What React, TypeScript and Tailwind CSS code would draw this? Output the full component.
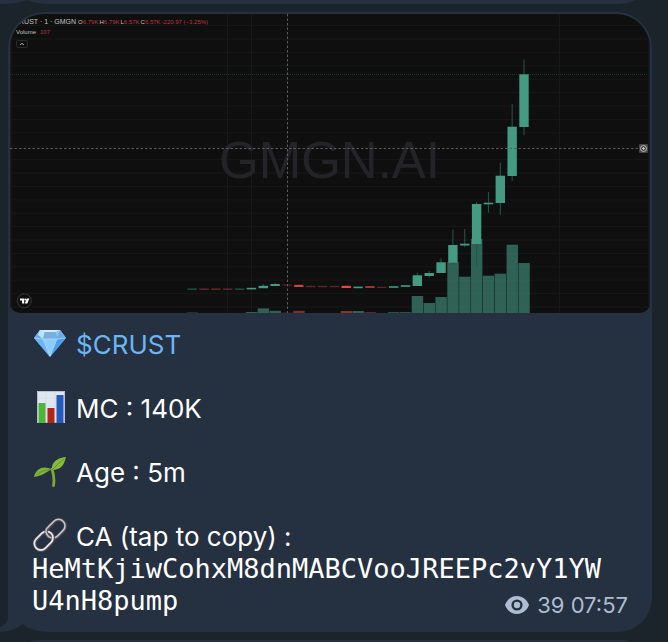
import type { ReactNode } from "react";

const SLOT = 11.85;
const FIRST_X = 182.2;
const BASE = 299;

const UP = "#459a82";
const DOWN = "#c5443f";
const FAINT_UP = "#1f4a3e";
const FAINT_DOWN = "#5c2426";

type Candle = {
  open: number;
  close: number;
  high?: number;
  low?: number;
  fill: string;
  volume?: number;
};

const candles: Candle[] = [
  { open: 274.4, close: 276, fill: FAINT_UP, volume: 1 },
  { open: 274.4, close: 276, fill: FAINT_DOWN },
  { open: 274.4, close: 276, fill: FAINT_DOWN },
  { open: 274.4, close: 276, fill: FAINT_DOWN },
  { open: 274.4, close: 276, fill: FAINT_UP },
  { open: 273.8, close: 275.4, fill: UP, volume: 1 },
  { open: 271.8, close: 274.2, high: 270, fill: UP, volume: 4.6 },
  { open: 270, close: 272, high: 269, fill: UP, volume: 2.2 },
  { open: 270, close: 272, fill: "#40191d", volume: 1 },
  { open: 270.8, close: 273, fill: DOWN, volume: 2.2 },
  { open: 271.8, close: 273.2, fill: FAINT_DOWN },
  { open: 271.8, close: 273.2, fill: FAINT_DOWN },
  { open: 271.8, close: 273.2, fill: FAINT_DOWN },
  { open: 271.8, close: 274, fill: "#dc4a46", volume: 2 },
  { open: 272.6, close: 274.2, fill: UP, volume: 2 },
  { open: 272, close: 274, fill: "#9c3634", volume: 1 },
  { open: 272.8, close: 274, fill: FAINT_DOWN },
  { open: 272, close: 274, fill: "#35806a", volume: 1 },
  { open: 271, close: 273, fill: "#35806a", volume: 1 },
  { open: 261.3, close: 272, high: 258.7, fill: UP, volume: 17 },
  { open: 259, close: 262, high: 257, low: 263.3, fill: UP, volume: 10 },
  { open: 248.3, close: 259, high: 244.3, fill: UP, volume: 16 },
  { open: 231, close: 248.7, high: 215.7, low: 251, fill: UP, volume: 51 },
  { open: 229.7, close: 231.5, high: 215, low: 233, fill: UP, volume: 36.3 },
  { open: 190, close: 230, high: 188, low: 252.7, fill: UP, volume: 74 },
  { open: 188.7, close: 190.3, high: 178, low: 198.7, fill: UP, volume: 37.3 },
  { open: 161.7, close: 189, high: 148.7, low: 201, fill: UP, volume: 39.3 },
  { open: 112.7, close: 162, high: 90, low: 167, fill: UP, volume: 68.3 },
  { open: 60.3, close: 113, high: 45.7, low: 121.3, fill: UP, volume: 50 },
];

const gridRows = Array.from({ length: 22 }, (_, i) => 11.6 + i * 13.4);

const quotes = [
  { label: "O", value: "6.79K" },
  { label: "H", value: "6.79K" },
  { label: "L", value: "6.57K" },
  { label: "C", value: "6.57K" },
];

// the address wraps after 35 characters
const addressLines = ["HeMtKjiwCohxM8dnMABCVooJREEPc2vY1YW", "U4nH8pump"];

function PriceChart() {
  return (
    <svg viewBox="0 0 640 299" className="block w-full" role="img" aria-label="CRUST price chart">
      <rect width="640" height="299" fill="#0f0f0f" />
      <g stroke="#181818">
        {gridRows.map((y) => (
          <line key={y} x1="0" x2="638" y1={y} y2={y} />
        ))}
        <line x1="217.5" x2="217.5" y1="0" y2="299" />
        <line x1="241.5" x2="241.5" y1="0" y2="299" />
        <line x1="549.5" x2="549.5" y1="0" y2="299" />
      </g>
      <path d="M0 0h1.5v299H0zM638.500 0h1.500v299h-1.500z" fill="#191d22" />
      <text
        x="209"
        y="164"
        fontSize="51"
        fill="#242428"
        className="font-['Liberation_Sans',sans-serif]"
      >
        GMGN.AI
      </text>
      <line x1="0" x2="638" y1="60.5" y2="60.5" stroke="#19382f" strokeDasharray="1 1" />

      {candles.map((c, i) => {
        const x = FIRST_X + i * SLOT;
        return (
          <g key={i}>
            {c.volume && (
              <rect
                x={x - 5.6}
                y={BASE - c.volume}
                width="11.4"
                height={c.volume}
                fill={c.fill}
                opacity="0.6"
              />
            )}
            <line x1={x} x2={x} y1={c.high ?? c.open} y2={c.low ?? c.close} stroke="#23594a" />
            <rect x={x - 4.7} y={c.open} width="9.4" height={c.close - c.open} fill={c.fill} />
          </g>
        );
      })}

      {/* crosshair */}
      <g stroke="#5c5c5c" strokeDasharray="2.5 2">
        <line x1="277.5" x2="277.5" y1="0" y2="299" />
        <line x1="0" x2="628" y1="134.5" y2="134.5" />
      </g>
      <rect x="629" y="130" width="9" height="9" rx="1" fill="#464646" />
      <circle cx="633.5" cy="134.5" r="3" fill="none" stroke="#d0d0d0" strokeWidth="0.8" />
      <path d="M632 134.5h3M633.5 133v3" stroke="#d0d0d0" strokeWidth="0.8" />

      {/* TradingView mark */}
      <circle cx="14.3" cy="286.8" r="7" fill="#0f0f0f" stroke="#38383a" />
      <path d="M10 284.5h4.2v5h-2.1v-3H10zM16.8 284.5h2.6l-2.1 5h-2.5z" fill="#fff" />
      <circle cx="15.4" cy="285.6" r="1" fill="#fff" />
    </svg>
  );
}

function ChartLegend() {
  return (
    <div className="absolute left-1 top-1 font-['Liberation_Sans',sans-serif] text-[6px] leading-2 text-[#c4c4c4]">
      <div className="flex items-center gap-px">
        <span className="pr-px text-[7px]">CRUST · 1 · GMGN</span>
        {quotes.map(({ label, value }) => (
          <span key={label}>
            {label}
            <span className="text-[#b83545]">{value}</span>
          </span>
        ))}
        <span className="text-[#b83545]">-220.97 (−3.25%)</span>
      </div>
      <div className="mt-0.5 flex gap-1 pl-0.5">
        <span>Volume</span>
        <span className="text-[#b83545]">107</span>
      </div>
      <button
        type="button"
        aria-label="Collapse legend"
        className="ml-0.5 mt-1 flex h-2 w-3 items-center justify-center rounded-xs border border-[#2c2c2c]"
      >
        <svg viewBox="0 0 6 4" className="h-1 w-1.5" fill="none" stroke="#aaa">
          <path d="M1 3l2-1.6L5 3" />
        </svg>
      </button>
    </div>
  );
}

function GemIcon() {
  return (
    <svg viewBox="0 0 32 32" className="size-8 shrink-0" aria-hidden="true">
      <path d="M6 3h20l6 8-16 19L0 11z" fill="#5aa9f0" />
      <path d="M6 3h20l6 8H0z" fill="#8fcaf6" />
      <path d="M6 3L0 11h9zM26 3l6 8h-9z" fill="#6aabea" />
      <path d="M6 3l5 2-2 7-5-4z" fill="#b9e2fb" />
      <path d="M11 4h10l3 8H9z" fill="#79aedd" />
      <path d="M6 3h20l-5 2H11z" fill="#d4eefd" />
      <path d="M0 11l9 1 7 18z" fill="#6db5f4" />
      <path d="M9 12h14l-7 18z" fill="#8bccfa" />
      <path d="M23 12l9-1-16 19z" fill="#4f9eee" />
      <path d="M1 11l8 1h14l8-1M9 12l7 17 7-17" stroke="#b4dffb" strokeWidth="0.7" fill="none" />
    </svg>
  );
}

function BarsIcon() {
  return (
    <svg viewBox="0 0 32 32" className="size-8 shrink-0" aria-hidden="true">
      <path d="M3 0h28v32H3z" fill="#dfe6f0" />
      <path d="M3 7h28M3 15h28M3 23h28M12 0v32M21 0v32" stroke="#d2dae6" strokeWidth="0.8" />
      <path d="M3.500 0.500h27v31h-27z" fill="none" stroke="#b7c0cf" />
      <path d="M4.500 12h7v20h-7z" fill="#4db53c" />
      <path d="M13.500 17h7v15h-7z" fill="#b3241b" />
      <path d="M22.500 4h7v28h-7z" fill="#2459bd" />
    </svg>
  );
}

function SeedlingIcon() {
  return (
    <svg viewBox="0 -2 32 32" className="size-8 shrink-0" aria-hidden="true">
      <path d="M18 12c2 6 2.500 11 1.500 16.500" fill="none" stroke="#7aac35" strokeWidth="2.800" strokeLinecap="round" />
      <path d="M0 20C2 11 10 8 18 12.500c-5 1-7 6-18 7.500z" fill="#7fb23a" />
      <path d="M18 13C17 5 23 1 32 0c-2 8-5 13-14 13z" fill="#86bb3d" />
      <path d="M3 18C8 13.500 12 12.500 18 13c4-4 7-7 12-11" fill="none" stroke="#5f8f28" strokeWidth="0.9" />
    </svg>
  );
}

function LinkIcon() {
  return (
    <svg viewBox="0 0 32 32" className="size-8 shrink-0 overflow-visible" fill="none" aria-hidden="true">
      <g transform="rotate(-45 16 16)">
        <rect x="14" y="9.500" width="21" height="13" rx="6.500" stroke="#5a4b4c" strokeWidth="3.400" />
        <rect x="14" y="9" width="21" height="13" rx="6.500" stroke="#bcc5d0" strokeWidth="1.600" />
        <rect x="-3" y="9.500" width="21" height="13" rx="6.500" stroke="#5a4b4c" strokeWidth="3.400" />
        <rect x="-3" y="9" width="21" height="13" rx="6.500" stroke="#e2e9f1" strokeWidth="1.800" />
        <path d="M14 17v-2c0-3 2-5.500 5-5.500" stroke="#5a4b4c" strokeWidth="3.400" />
        <path d="M14 17v-2c0-3 2-6 5-6" stroke="#bcc5d0" strokeWidth="1.600" />
      </g>
    </svg>
  );
}

function EyeIcon() {
  return (
    <svg viewBox="0 0 24 18" className="h-[18px] w-6" aria-hidden="true">
      <path
        fill="#aebdd2"
        fillRule="evenodd"
        d="M12 0C6.500 0 2 3.600 0 9c2 5.400 6.500 9 12 9s10-3.600 12-9c-2-5.400-6.500-9-12-9zm0 3.400a5.600 5.600 0 110 11.200 5.600 5.600 0 010-11.200z"
      />
      <circle cx="12" cy="9" r="3.200" fill="#aebdd2" />
    </svg>
  );
}

// little hook under the bottom left corner of an incoming bubble
function BubbleTail() {
  return (
    <svg viewBox="0 0 50 30" className="absolute -left-2 bottom-0 h-[30px] w-[50px]" aria-hidden="true">
      <path d="M9 0v30H0v-5q8-3 8-11V0z" fill="#253040" />
      <path d="M0 30q15-1 22.500-8Q31 30 50 30z" fill="#1b232b" />
    </svg>
  );
}

function Line({ icon, children }: { icon: ReactNode; children: ReactNode }) {
  return (
    <div className="flex h-8 items-center gap-2.5 pl-0.5">
      <span className="-mt-1">{icon}</span>
      <span>{children}</span>
    </div>
  );
}

export default function App() {
  return (
    <main className="min-h-screen overflow-hidden bg-[#1b232b] font-['Inter',sans-serif]">
      <div className="relative ml-2 mr-4 h-1 bg-[#253040]">
        <svg viewBox="0 0 50 4" className="absolute -left-2 top-0 h-1 w-[50px]" aria-hidden="true">
          <path d="M0 0h50v4H0z" fill="#253040" />
          <path d="M0 4q18 0 27-4 9 4 23 4z" fill="#1b232b" />
        </svg>
        <svg viewBox="0 0 36 4" className="absolute right-0 top-0 h-1 w-9" aria-hidden="true">
          <path d="M36 0H20Q12 4 0 4h36z" fill="#1b232b" />
        </svg>
      </div>

      <article className="relative ml-2 mr-4 mt-2 rounded-[36px] rounded-bl-none rounded-br-[34px] bg-[#253040]">
        <div className="p-0.5">
          <div className="relative overflow-hidden rounded-b-[10px] rounded-t-[34px]">
            <PriceChart />
            <ChartLegend />
          </div>
        </div>

        <div className="relative z-10 px-6 pb-[11px] pt-3.5 text-[26px] leading-8 text-white">
          <div className="flex flex-col gap-8">
            <Line icon={<GemIcon />}>
              <a href="#crust" className="text-[#6cb4f4]">
                $CRUST
              </a>
            </Line>
            <Line icon={<BarsIcon />}>MC : 140K</Line>
            <Line icon={<SeedlingIcon />}>Age : 5m</Line>
            <Line icon={<LinkIcon />}>CA (tap to copy) :</Line>
          </div>
          <button
            type="button"
            className="block text-left font-['DejaVu_Sans_Mono',monospace] text-[27px] leading-8"
          >
            {addressLines.map((line) => (
              <span key={line} className="block w-fit">
                {line}
              </span>
            ))}
          </button>
          <div className="-mt-7 ml-auto flex w-fit items-center gap-2 text-[22px] leading-8 text-[#aebdd2]">
            <EyeIcon />
            <span>39 07:57</span>
          </div>
        </div>
        <BubbleTail />
      </article>

      <div className="ml-2 mr-4 mt-2 h-8 rounded-t-[34px] bg-[#253040]" />
    </main>
  );
}
